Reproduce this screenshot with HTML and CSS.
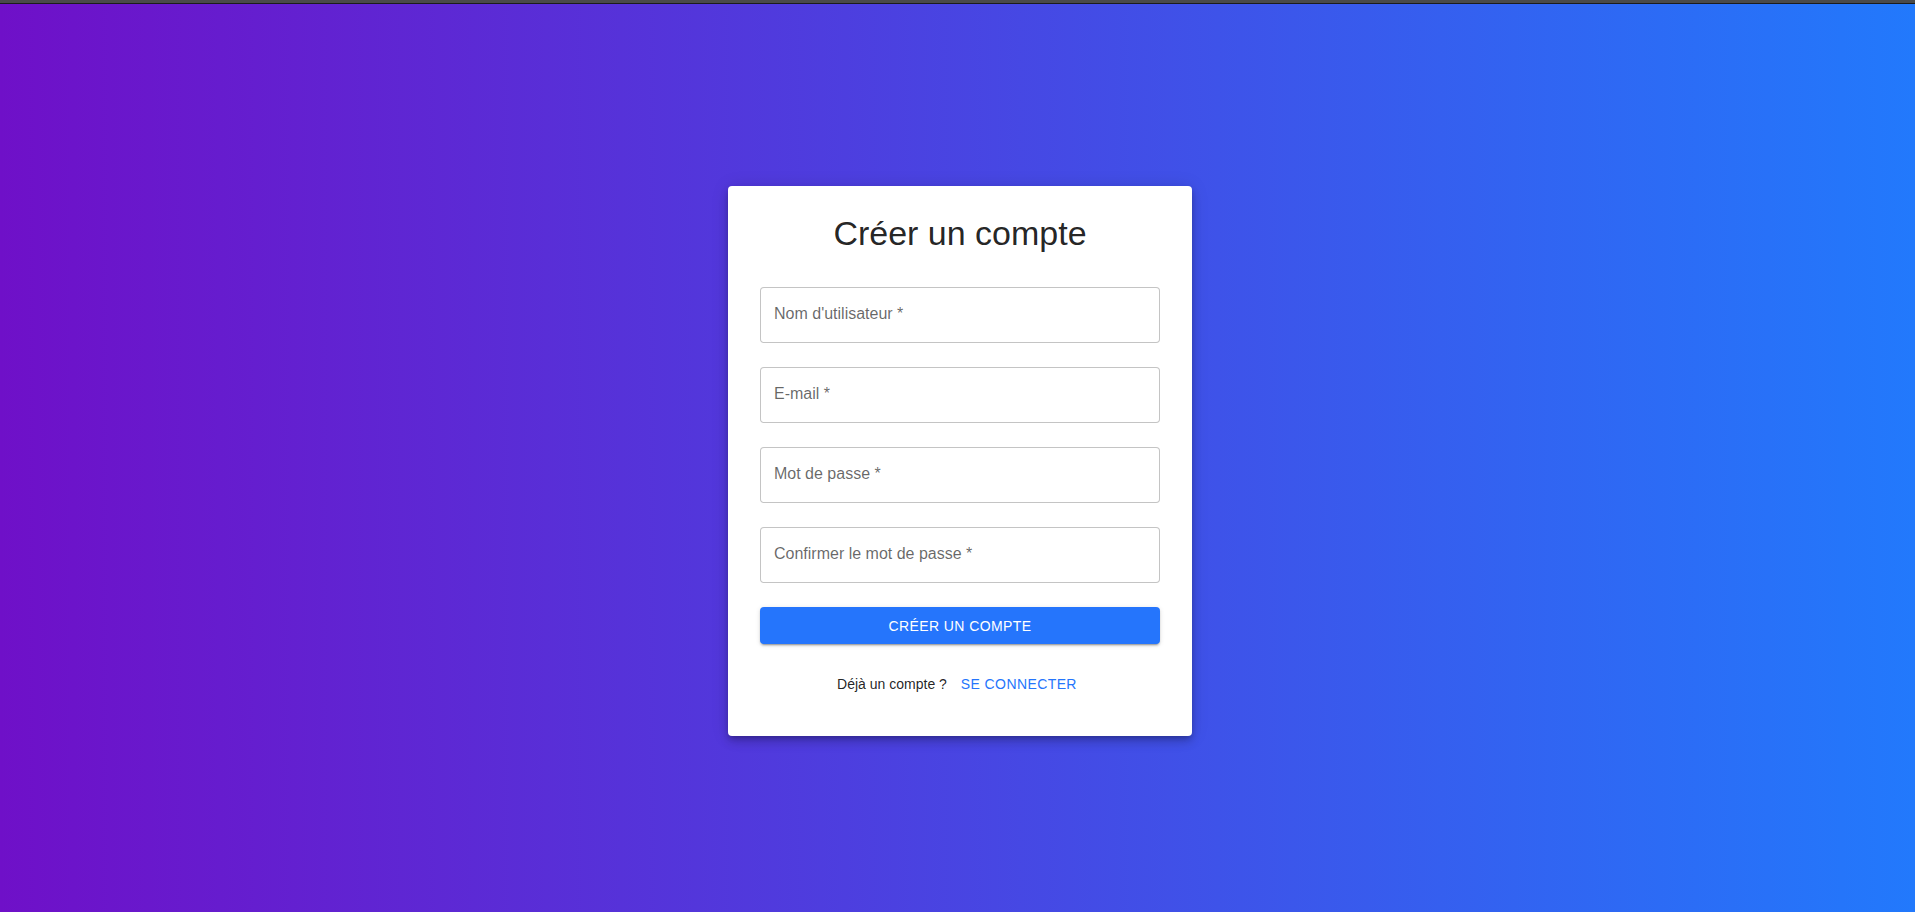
FILE: index.html
```html
<!DOCTYPE html>
<html lang="fr">
<head>
<meta charset="utf-8">
<title>Créer un compte</title>
<link rel="stylesheet" href="styles.css">
</head>
<body>
<div class="topbar"></div>
<main class="page">
  <section class="card">
    <h1 class="title">Créer un compte</h1>
    <form class="form">
      <input class="field" type="text" placeholder="Nom d'utilisateur *">
      <input class="field" type="email" placeholder="E-mail *">
      <input class="field" type="password" placeholder="Mot de passe *">
      <input class="field" type="password" placeholder="Confirmer le mot de passe *">
      <button class="submit" type="button">Créer un compte</button>
    </form>
    <div class="footer">
      <span class="footer-text">Déjà un compte ?</span>
      <a class="link" href="#">Se connecter</a>
    </div>
  </section>
</main>
</body>
</html>
```
FILE: styles.css
```css
* { box-sizing: border-box; }
html, body { margin: 0; height: 100%; }
body {
  display: flex;
  flex-direction: column;
  font-family: "Liberation Sans", Arial, sans-serif;
  background: linear-gradient(90deg, #6f10c8, #2279fc);
}
.topbar {
  height: 4px;
  flex: none;
  background: #4a4a4a;
  border-bottom: 1px solid #1c1c1c;
}
.page {
  flex: 1;
  display: flex;
  align-items: center;
  justify-content: center;
  padding: 6px 0 0 5px;
}
.card {
  width: 464px;
  background: #fff;
  border-radius: 4px;
  padding: 25px 32px 33px;
  box-shadow: 0 3px 5px -1px rgba(0,0,0,.2), 0 6px 10px 0 rgba(0,0,0,.14), 0 1px 18px 0 rgba(0,0,0,.12);
}
.title {
  margin: 0 0 31px;
  font-size: 34px;
  font-weight: 400;
  line-height: 45px;
  text-align: center;
  color: rgba(0,0,0,.87);
}
.form {
  display: flex;
  flex-direction: column;
  gap: 24px;
}
.field {
  display: block;
  width: 100%;
  height: 56px;
  margin: 0;
  padding: 14px 13px 17px;
  border: 1px solid rgba(0,0,0,.23);
  border-radius: 4px;
  font-family: inherit;
  font-size: 16px;
  line-height: 23px;
  color: rgba(0,0,0,.87);
  background: #fff;
  outline: none;
}
.field::placeholder { color: rgba(0,0,0,.6); opacity: 1; }
.submit {
  display: block;
  width: 100%;
  height: 37px;
  border: 0;
  border-radius: 4px;
  padding: 6px 16px;
  background: #2575fc;
  color: #fff;
  font-family: inherit;
  font-size: 14px;
  line-height: 24.5px;
  letter-spacing: .4px;
  text-transform: uppercase;
  box-shadow: 0 3px 1px -2px rgba(0,0,0,.2), 0 2px 2px 0 rgba(0,0,0,.14), 0 1px 5px 0 rgba(0,0,0,.12);
  cursor: pointer;
}
.footer {
  margin-top: 22px;
  display: flex;
  justify-content: center;
  align-items: center;
  height: 36.5px;
  font-size: 14px;
  padding-left: 2px;
}
.footer-text {
  color: rgba(0,0,0,.87);
  line-height: 24.5px;
}
.link {
  margin-left: 6px;
  padding: 6px 8px;
  line-height: 24.5px;
  color: #2575fc;
  text-decoration: none;
  text-transform: uppercase;
  letter-spacing: .4px;
  border-radius: 4px;
}
```
